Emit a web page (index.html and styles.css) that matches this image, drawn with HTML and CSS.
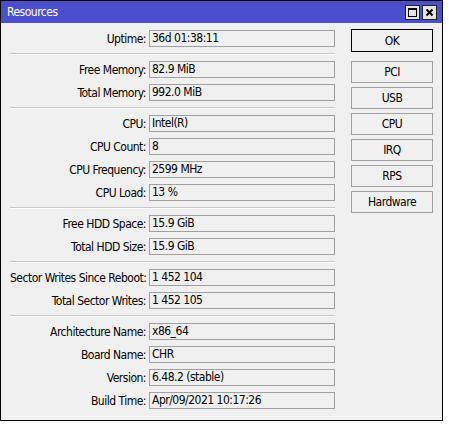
FILE: index.html
```html
<!DOCTYPE html>
<html>
<head>
<meta charset="utf-8">
<link rel="stylesheet" href="styles.css">
</head>
<body>
<div class="window">
  <div class="titlebar">
    <span class="title">Resources</span>
    <div class="tbtns">
      <span class="tbtn"><svg width="11" height="11" viewBox="0 0 11 11"><rect x="1.5" y="1.5" width="8" height="8" fill="none" stroke="#000" stroke-width="1"/><rect x="1" y="1" width="9" height="2" fill="#000"/></svg></span>
      <span class="tbtn"><svg width="11" height="11" viewBox="0 0 11 11"><path d="M2.5 2.5 L8.5 8.5 M8.5 2.5 L2.5 8.5" stroke="#000" stroke-width="2"/></svg></span>
    </div>
  </div>
  <div class="content">
    <div class="fields">
      <div class="row"><span class="lbl">Uptime:</span><span class="val">36d 01:38:11</span></div>
      <div class="sep"></div>
      <div class="row"><span class="lbl">Free Memory:</span><span class="val">82.9 MiB</span></div>
      <div class="row"><span class="lbl">Total Memory:</span><span class="val">992.0 MiB</span></div>
      <div class="sep"></div>
      <div class="row"><span class="lbl">CPU:</span><span class="val">Intel(R)</span></div>
      <div class="row"><span class="lbl">CPU Count:</span><span class="val">8</span></div>
      <div class="row"><span class="lbl">CPU Frequency:</span><span class="val">2599 MHz</span></div>
      <div class="row"><span class="lbl">CPU Load:</span><span class="val">13 %</span></div>
      <div class="sep"></div>
      <div class="row"><span class="lbl">Free HDD Space:</span><span class="val">15.9 GiB</span></div>
      <div class="row"><span class="lbl">Total HDD Size:</span><span class="val">15.9 GiB</span></div>
      <div class="sep"></div>
      <div class="row"><span class="lbl">Sector Writes Since Reboot:</span><span class="val">1 452 104</span></div>
      <div class="row"><span class="lbl">Total Sector Writes:</span><span class="val">1 452 105</span></div>
      <div class="sep"></div>
      <div class="row"><span class="lbl">Architecture Name:</span><span class="val">x86_64</span></div>
      <div class="row"><span class="lbl">Board Name:</span><span class="val">CHR</span></div>
      <div class="row"><span class="lbl">Version:</span><span class="val">6.48.2 (stable)</span></div>
      <div class="row"><span class="lbl">Build Time:</span><span class="val">Apr/09/2021 10:17:26</span></div>
    </div>
    <div class="buttons">
      <button class="btn ok">OK</button>
      <div class="btngroup">
        <button class="btn">PCI</button>
        <button class="btn">USB</button>
        <button class="btn">CPU</button>
        <button class="btn">IRQ</button>
        <button class="btn">RPS</button>
        <button class="btn">Hardware</button>
      </div>
    </div>
  </div>
</div>
</body>
</html>
```
FILE: styles.css
```css
html, body {
  margin: 0;
  padding: 0;
  background: #ffffff;
}
body {
  font-family: "DejaVu Sans Condensed", "Liberation Sans", Arial, sans-serif;
  font-size: 12px;
  letter-spacing: -0.5px;
  color: #000;
}
.window {
  width: 443px;
  height: 421px;
  box-sizing: border-box;
  border: 1px solid #000;
  background: #f0f0f0;
  box-shadow: 0 2px 0 #a8a8a8;
  display: flex;
  flex-direction: column;
}
.titlebar {
  height: 22px;
  background: #4b4fce;
  display: flex;
  align-items: center;
  justify-content: space-between;
  padding: 0 5px 0 6px;
}
.title {
  color: #fff;
  font-size: 12px;
}
.tbtns {
  display: flex;
  gap: 2px;
}
.tbtn {
  width: 15px;
  height: 15px;
  box-sizing: border-box;
  border: 1px solid #222;
  background: #e4e4e4;
  display: flex;
  align-items: center;
  justify-content: center;
}
.tbtn svg { display: block; }
.content {
  display: flex;
  padding: 7px 0 0 9px;
}
.fields {
  width: 325px;
  display: flex;
  flex-direction: column;
  gap: 6px;
}
.row {
  display: flex;
  align-items: center;
  height: 17px;
}
.lbl {
  width: 136px;
  text-align: right;
  white-space: nowrap;
}
.val {
  margin-left: 3px;
  width: 186px;
  height: 17px;
  box-sizing: border-box;
  border: 1px solid #a0a0a0;
  padding: 0 0 0 2px;
  line-height: 15px;
  white-space: nowrap;
}
.sep {
  height: 1px;
  border-top: 1px solid #c8c8c8;
  background: #ffffff;
}
.buttons {
  margin-left: 16px;
  width: 82px;
  display: flex;
  flex-direction: column;
}
.btn {
  font-family: "DejaVu Sans Condensed", "Liberation Sans", Arial, sans-serif;
  font-size: 12px;
  letter-spacing: -0.5px;
  color: #000;
  width: 82px;
  height: 22px;
  box-sizing: border-box;
  border: 1px solid #a0a0a0;
  background: #f0f0f0;
  padding: 0;
  margin: 0;
}
.btn.ok {
  height: 23px;
  margin-top: -1px;
  border: 1px solid #000;
}
.btngroup {
  margin-top: 9px;
  display: flex;
  flex-direction: column;
  gap: 4px;
}
```
